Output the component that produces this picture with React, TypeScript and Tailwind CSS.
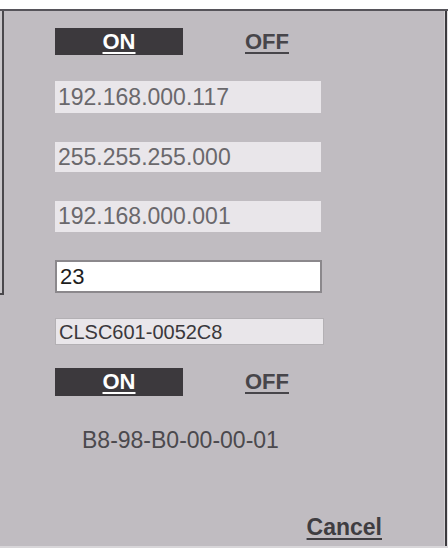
const field = "flex items-center pl-[3px] font-['Liberation_Sans',Arial,sans-serif]";

function Toggle({ className = "" }: { className?: string }) {
  return (
    <div className={`flex items-center ${className}`}>
      <div className="flex h-full w-[128px] items-center justify-center bg-[#3c393d]">
        <span className="text-[22px] font-bold leading-none text-white underline decoration-2 underline-offset-[3px]">
          ON
        </span>
      </div>
      <span className="ml-[62px] text-[22px] font-bold leading-none text-[#47454a] underline decoration-2 underline-offset-[3px]">
        OFF
      </span>
    </div>
  );
}

function ReadField({ value, className = "" }: { value: string; className?: string }) {
  return (
    <div className={`${field} w-[266px] bg-[#e9e6ea] text-[23px] text-[#6a686c] ${className}`}>
      {value}
    </div>
  );
}

export default function App() {
  return (
    <div className="flex h-[548px] w-[448px] flex-col bg-white font-['Liberation_Sans',Arial,sans-serif]">
      <div className="h-[9px] bg-white" />
      <div className="h-[2px] bg-[#56545a]" />
      <div className="flex flex-1 bg-[#c0bcc1]">
        {/* edge of the page panel behind */}
        <div className="w-[4px]">
          <div className="h-[284px] w-[4px] border-b-2 border-r-2 border-[#4a484c] bg-[#c9c6ca]" />
        </div>

        <div className="flex flex-1 flex-col pl-[51px]">
          <Toggle className="mt-[17px] h-[27px]" />
          <ReadField value="192.168.000.117" className="mt-[26px] h-[32px]" />
          <ReadField value="255.255.255.000" className="mt-[29px] h-[30px]" />
          <ReadField value="192.168.000.001" className="mt-[29px] h-[31px]" />
          <div
            className={`${field} mt-[28px] h-[33px] w-[267px] border-2 border-[#8b888c] bg-white text-[22px] text-[#1e1e1e]`}
          >
            23
          </div>
          <div
            className={`${field} mt-[25px] h-[27px] w-[269px] border border-[#b3b0b4] bg-[#e9e6ea] text-[20px] text-[#3a383c]`}
          >
            CLSC601-0052C8
          </div>
          <Toggle className="mt-[23px] h-[28px]" />
          <div className="ml-[27px] mt-[31px] text-[23px] leading-[26px] text-[#4b494d]">
            B8-98-B0-00-00-01
          </div>
          <div className="mt-auto mb-[6px] flex justify-end pr-[62px]">
            <span className="text-[23px] font-bold leading-[26px] text-[#3f3d41] underline decoration-2 underline-offset-[3px]">
              Cancel
            </span>
          </div>
        </div>

        <div className="flex w-[4px]">
          <div className="w-[1px] bg-[#d2cfd3]" />
          <div className="w-[2px] bg-[#3c3a3e]" />
          <div className="w-[1px] bg-[#e2e0e3]" />
        </div>
      </div>
      <div className="h-[2px] bg-[#d8d6d9]" />
    </div>
  );
}
